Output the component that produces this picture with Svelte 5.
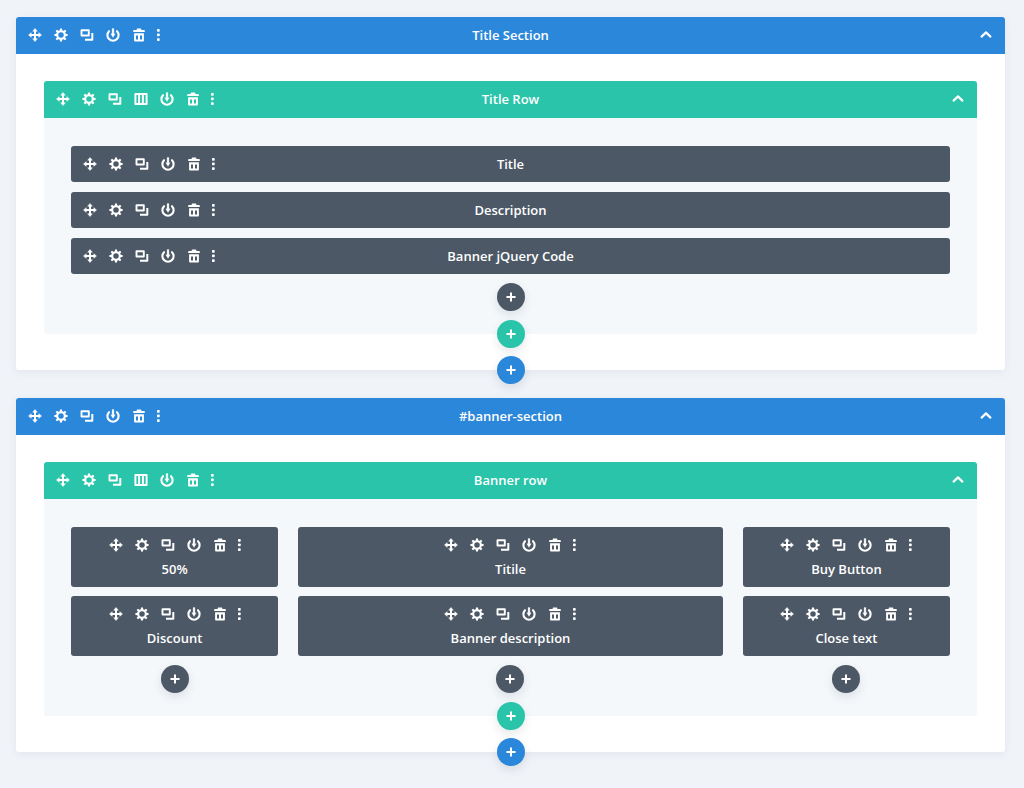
<script>
	const sections = $state([
		{
			title: 'Title Section',
			open: true,
			row: {
				title: 'Title Row',
				open: true,
				columns: [['Title', 'Description', 'Banner jQuery Code']]
			}
		},
		{
			title: '#banner-section',
			open: true,
			row: {
				title: 'Banner row',
				open: true,
				columns: [
					['50%', 'Discount'],
					['Titile', 'Banner description'],
					['Buy Button', 'Close text']
				]
			}
		}
	]);

	const tools = [
		{ name: 'move', label: 'Move' },
		{ name: 'settings', label: 'Settings' },
		{ name: 'duplicate', label: 'Duplicate' },
		{ name: 'columns', label: 'Change column structure' },
		{ name: 'save', label: 'Save to library' },
		{ name: 'delete', label: 'Delete' },
		{ name: 'more', label: 'More options' }
	];

	const basicTools = tools.filter((t) => t.name !== 'columns');
	const teeth = [0, 45, 90, 135, 180, 225, 270, 315];
</script>

{#snippet icon(name)}
	{#if name === 'more'}
		<svg width="4" height="16" viewBox="0 0 4 16" fill="currentColor" aria-hidden="true">
			<rect x="0" y="2" width="2.7" height="2.7" rx="0.7" />
			<rect x="0" y="6.6" width="2.7" height="2.7" rx="0.7" />
			<rect x="0" y="11.2" width="2.7" height="2.7" rx="0.7" />
		</svg>
	{:else}
		<svg width="16" height="16" viewBox="0 0 16 16" fill="currentColor" aria-hidden="true">
			{#if name === 'move'}
				<path d="M7 3.5h2v9H7z M3.5 7h9v2h-9z" />
				<path d="M8 1.5l2.3 2.7H5.7z M8 14.5l-2.3-2.7h4.6z M1.5 8l2.7-2.3v4.6z M14.5 8l-2.7 2.3V5.7z" stroke="currentColor" stroke-width="0.5" stroke-linejoin="round" />
			{:else if name === 'settings'}
				<circle cx="8" cy="8" r="3.8" fill="none" stroke="currentColor" stroke-width="2.1" />
				{#each teeth as angle}
					<path d="M6.7 4l0.3-2.6h2L9.3 4z" transform="rotate({angle} 8 8)" />
				{/each}
			{:else if name === 'duplicate'}
				<path d="M2.5 3.2h7.3v5.3H2.5z" fill="none" stroke="currentColor" stroke-width="1.9" stroke-linejoin="round" />
				<path d="M13.3 6v6.7H6" fill="none" stroke="currentColor" stroke-width="2" stroke-linejoin="round" />
			{:else if name === 'columns'}
				<path d="M2.4 3.1h11.2v9.8H2.4z M6.1 3v10 M9.9 3v10" fill="none" stroke="currentColor" stroke-width="2" stroke-linejoin="round" />
			{:else if name === 'save'}
				<path d="M4 4.2a5.6 5.6 0 1 0 8 0" fill="none" stroke="currentColor" stroke-width="2.1" stroke-linecap="round" />
				<path d="M7.1 1.6h1.8v5.2h1.3L8 10.4 5.8 6.8h1.3z" stroke="currentColor" stroke-width="0.3" stroke-linejoin="round" />
			{:else if name === 'delete'}
				<path d="M5.7 3V2.1q0-0.6 0.6-0.6h3.4q0.6 0 0.6 0.6V3h2.8q0.7 0 0.7 0.7v1.2H2.2V3.7q0-0.7 0.7-0.7z" />
				<path fill-rule="evenodd" d="M3.1 6.3h9.8v7.4q0 0.8-0.8 0.8H3.9q-0.8 0-0.8-0.8z M5 8.6v3.8h2V8.6z M9 8.6v3.8h2V8.6z" />
			{:else if name === 'chevron'}
				<path d="M3.6 9.6L8 5.4l4.4 4.2" fill="none" stroke="currentColor" stroke-width="2.2" stroke-linecap="round" stroke-linejoin="round" />
			{:else if name === 'plus'}
				<path d="M8 4.2v7.6M4.2 8h7.6" fill="none" stroke="currentColor" stroke-width="2" stroke-linecap="round" />
			{/if}
		</svg>
	{/if}
{/snippet}

{#snippet toolbar(items)}
	<div class="toolbar">
		{#each items as tool}
			<button type="button" class="tool" aria-label={tool.label}>
				{@render icon(tool.name)}
			</button>
		{/each}
	</div>
{/snippet}

{#snippet header(item, items)}
	<header class="bar">
		{@render toolbar(items)}
		<h2 class="title">{item.title}</h2>
		<button
			type="button"
			class="tool toggle"
			class:closed={!item.open}
			aria-label="Toggle {item.title}"
			aria-expanded={item.open}
			onclick={() => (item.open = !item.open)}
		>
			{@render icon('chevron')}
		</button>
	</header>
{/snippet}

{#snippet addButton(kind)}
	<button type="button" class="add add-{kind}" aria-label="Add {kind}">
		{@render icon('plus')}
	</button>
{/snippet}

<main class="builder">
	{#each sections as section}
		<section class="section">
			{@render header(section, basicTools)}
			{#if section.open}
				<div class="section-body">
					<div class="row">
						{@render header(section.row, tools)}
						{#if section.row.open}
							<div class="row-body">
								<div class="columns" class:split={section.row.columns.length > 1}>
									{#each section.row.columns as modules}
										<div class="column">
											<div class="modules">
												{#each modules as name}
													<article class="module">
														{@render toolbar(basicTools)}
														<h3 class="title">{name}</h3>
													</article>
												{/each}
											</div>
											{@render addButton('module')}
										</div>
									{/each}
								</div>
								{@render addButton('row')}
							</div>
						{/if}
					</div>
					{@render addButton('section')}
				</div>
			{/if}
		</section>
	{/each}
</main>

<style>
	:global(body) {
		margin: 0;
		background: #f0f3f8;
	}

	.builder {
		display: flex;
		flex-direction: column;
		gap: 28px;
		padding: 17px 19px 36px 16px;
		font-family: 'Open Sans', 'Noto Sans', sans-serif;
		color: #fff;
	}

	.section {
		background: #fff;
		border-radius: 3px;
		box-shadow: 0 2px 8px rgba(76, 88, 102, 0.08);
	}

	.section-body {
		display: flex;
		flex-direction: column;
		padding: 27px 28px 0;
	}

	.row {
		background: #f4f8fb;
		border-radius: 3px;
	}

	.row-body {
		display: flex;
		flex-direction: column;
		padding: 28px 27px 0;
	}

	.bar {
		display: grid;
		grid-template-columns: 1fr auto 1fr;
		align-items: center;
		min-height: 37px;
		padding: 0 11px 2px;
		box-sizing: border-box;
		background: #2b87da;
		border-radius: 3px 3px 0 0;
	}

	.row .bar {
		background: #29c4a9;
	}

	.title {
		margin: 0;
		font-size: 13px;
		font-weight: 600;
		line-height: 20px;
		text-align: center;
	}

	.toolbar {
		display: flex;
		align-items: center;
		gap: 10px;
	}

	.tool,
	.add {
		display: flex;
		align-items: center;
		justify-content: center;
		padding: 0;
		border: none;
		background: none;
		color: inherit;
		cursor: pointer;
	}

	.tool:hover {
		opacity: 0.8;
	}

	.toggle {
		justify-self: end;
	}

	.toggle.closed {
		transform: rotate(180deg);
	}

	.columns {
		display: grid;
		gap: 20px;
	}

	.columns.split {
		grid-template-columns: 1fr 2.05fr 1fr;
	}

	.column {
		display: flex;
		flex-direction: column;
	}

	.modules {
		display: flex;
		flex-direction: column;
		gap: 10px;
	}

	.split .modules {
		gap: 9px;
	}

	.module {
		display: grid;
		grid-template-columns: 1fr auto 1fr;
		align-items: center;
		min-height: 36px;
		padding: 0 11px;
		box-sizing: border-box;
		background: #4c5866;
		border-radius: 3px;
	}

	.split .module {
		display: flex;
		flex-direction: column;
		gap: 6px;
		min-height: 60px;
		padding: 10px 11px 8px;
	}

	.add {
		align-self: center;
		width: 28px;
		height: 28px;
		margin-top: 9px;
		border-radius: 50%;
		box-shadow: 0 4px 10px rgba(76, 88, 102, 0.14);
	}

	.add-module {
		background: #4c5866;
	}

	/* row and section buttons straddle the bottom edge of their parent */
	.add-row {
		position: relative;
		margin-bottom: -14px;
		background: #29c4a9;
	}

	.add-section {
		position: relative;
		margin-top: 22px;
		margin-bottom: -14px;
		background: #2b87da;
	}
</style>
